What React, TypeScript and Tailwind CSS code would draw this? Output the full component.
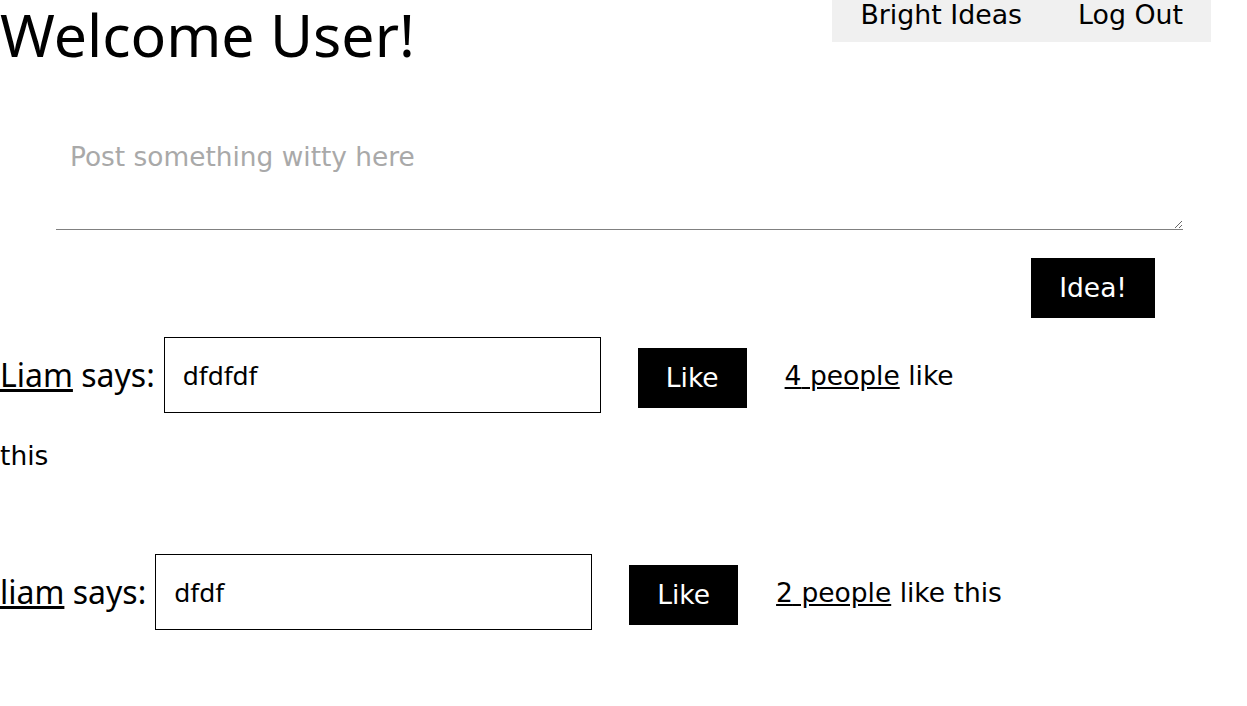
import React from "react";

const sans = "font-['Segoe_UI','Noto_Sans',sans-serif]";
const verd = "font-['Verdana','DejaVu_Sans',sans-serif]";

type PostProps = {
  name: string;
  idea: string;
  likes: number;
  wrap?: boolean;
};

function Post({ name, idea, likes, wrap }: PostProps) {
  return (
    <div>
      <div className="flex items-center">
        <p className={`${sans} text-[32px] text-black`}>
          <a href="#" className="underline">
            {name}
          </a>{" "}
          says:
        </p>
        <input
          readOnly
          value={idea}
          className={`${sans} ml-[9px] h-[76px] w-[437px] border border-black px-[18px] text-[26px] text-black outline-none`}
        />
        <button
          className={`${verd} ml-[37px] mt-[6px] bg-black px-7 py-[15px] text-[26.5px] leading-[30px] text-white`}
        >
          Like
        </button>
        <p className={`${verd} ml-[38px] mt-[2px] text-[26.5px] leading-[30px] text-black`}>
          <a href="#" className="underline">
            {likes} people
          </a>{" "}
          like{wrap ? "" : " this"}
        </p>
      </div>
      {wrap && (
        <p className={`${verd} mt-[28px] text-[26.5px] leading-[30px] text-black`}>this</p>
      )}
    </div>
  );
}

export default function App() {
  return (
    <div className="min-h-screen bg-white text-black">
      <header className="flex items-start justify-between">
        <h1 className={`${sans} text-[59px] leading-[68px]`}>Welcome User!</h1>
        <nav className={`${verd} mr-[36px] flex bg-[#f0f0f0] pb-3 text-[26.8px] leading-[30px]`}>
          <a href="#" className="px-7">
            Bright Ideas
          </a>
          <a href="#" className="px-7">
            Log Out
          </a>
        </nav>
      </header>

      <form>
        <textarea
          placeholder="Post something witty here"
          className={`${verd} ml-[56px] mt-[60px] block h-[102px] w-[1127px] border-0 border-b border-[#808080] p-[14px] text-[26.4px] leading-[30px] outline-none placeholder:text-[#a9a9a9]`}
        />
        <div className="mt-[28px] flex justify-end pr-[92px]">
          <button
            type="button"
            className={`${verd} bg-black px-7 py-[15px] text-[26.5px] leading-[30px] text-white`}
          >
            Idea!
          </button>
        </div>
      </form>

      <div className="mt-[19px]">
        <Post name="Liam" idea="dfdfdf" likes={4} wrap />
      </div>
      <div className="mt-[83px]">
        <Post name="liam" idea="dfdf" likes={2} />
      </div>
    </div>
  );
}
